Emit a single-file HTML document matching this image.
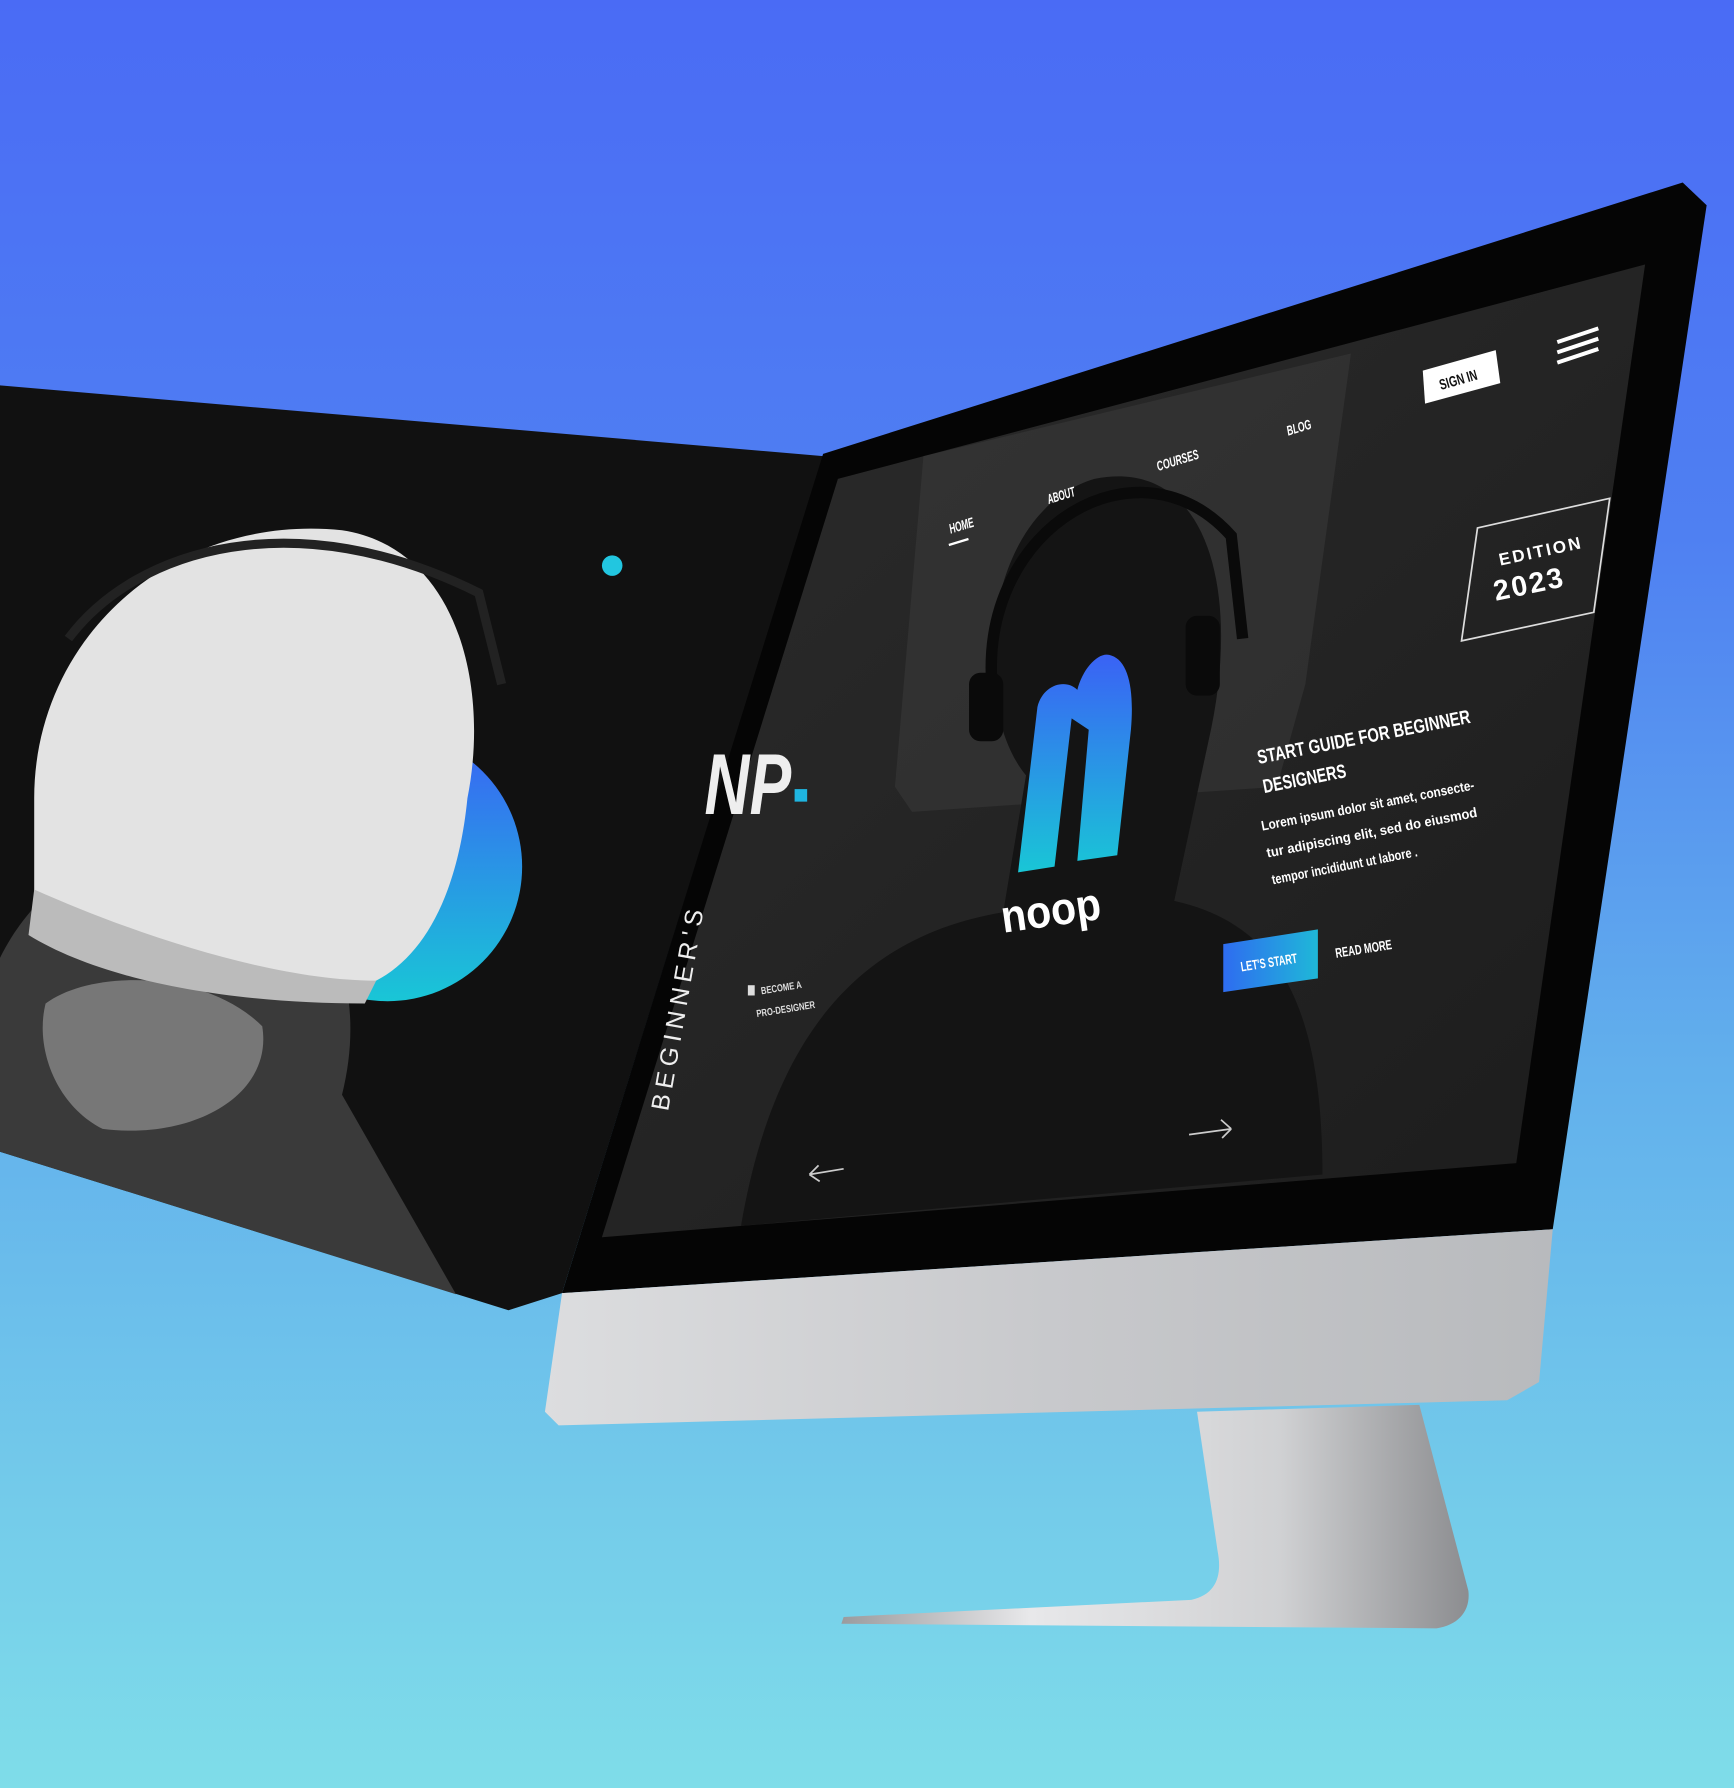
<!DOCTYPE html>
<html><head><meta charset="utf-8"><style>
html,body{margin:0;padding:0;width:1734px;height:1788px;overflow:hidden}
svg{display:block}
text{font-family:"Liberation Sans",sans-serif}
</style></head><body>
<svg width="1734" height="1788" viewBox="0 0 1521 1568" preserveAspectRatio="none">
<defs>
<linearGradient id="bg" x1="0" y1="0" x2="0" y2="1">
<stop offset="0" stop-color="#4a6bf5"/><stop offset="0.3" stop-color="#4f80f2"/><stop offset="0.6" stop-color="#62b0ec"/><stop offset="1" stop-color="#7fdde9"/></linearGradient>
<linearGradient id="blu" x1="0" y1="0" x2="0" y2="1"><stop offset="0" stop-color="#3a62f5"/><stop offset="1" stop-color="#19c6d6"/></linearGradient>
<linearGradient id="chin" x1="0" y1="0" x2="1" y2="0"><stop offset="0" stop-color="#dcdddf"/><stop offset="0.5" stop-color="#c8c9cc"/><stop offset="1" stop-color="#b8babd"/></linearGradient>
<linearGradient id="stand" x1="0" y1="0" x2="1" y2="0"><stop offset="0" stop-color="#9a9b9e"/><stop offset="0.3" stop-color="#e8e8ea"/><stop offset="0.7" stop-color="#d0d1d3"/><stop offset="1" stop-color="#8c8d90"/></linearGradient>
<linearGradient id="scr" x1="0" y1="0" x2="1" y2="1"><stop offset="0" stop-color="#2c2c2c"/><stop offset="1" stop-color="#1c1c1c"/></linearGradient>
<linearGradient id="btn" x1="0" y1="0" x2="1" y2="0"><stop offset="0" stop-color="#2e6cf0"/><stop offset="1" stop-color="#1fb8d8"/></linearGradient>
</defs>
<rect width="1521" height="1568" fill="url(#bg)"/>
<!-- left panel -->
<polygon points="0,338 722,400 493,1134 446,1149 0,1010" fill="#111"/>
<circle cx="340" cy="760" r="118" fill="url(#blu)"/>
<path d="M0,840 C40,760 120,720 230,760 C300,800 320,880 300,960 L400,1135 L0,1010 Z" fill="#3a3a3a"/>
<path d="M40,880 C80,850 180,850 230,900 C240,960 170,1000 90,990 C50,970 30,920 40,880Z" fill="#777"/>
<path d="M30,700 C30,560 150,450 300,465 C400,480 430,600 410,700 C400,800 360,860 300,870 C200,860 100,830 30,800 Z" fill="#e3e3e3"/>
<path d="M30,780 C120,820 240,860 330,860 L320,880 C200,880 90,860 25,820Z" fill="#bbb"/>
<path d="M60,560 C120,480 260,440 420,520 L440,600" stroke="#222" stroke-width="8" fill="none"/>
<circle cx="537" cy="496" r="9" fill="#22c6e0"/>
<!-- monitor bezel -->
<polygon points="722,398 1476,160 1497,180 1362,1078 493,1134" fill="#050505"/>
<polygon points="493,1134 1362,1078 1350,1212 1322,1228 490,1250 478,1238" fill="url(#chin)"/>
<!-- stand -->
<path d="M1050,1238 L1245,1232 L1288,1395 C1290,1412 1280,1425 1260,1428 L738,1424 L740,1418 L1045,1403 C1068,1398 1072,1380 1068,1360 Z" fill="url(#stand)"/>
<!-- screen -->
<polygon points="735,420 1443,232 1330,1020 528,1085" fill="url(#scr)"/>
<polygon points="810,400 1185,310 1145,600 1120,690 800,712 785,690" fill="#3a3a3a" opacity="0.55"/>
<path d="M650,1075 C680,900 760,820 880,800 L900,680 C850,620 860,450 960,420 C1060,400 1090,520 1060,650 L1030,790 C1120,810 1160,880 1160,1030 Z" fill="#141414"/>
<path d="M870,600 C860,460 1000,380 1080,470 L1090,560" stroke="#0a0a0a" stroke-width="10" fill="none"/>
<rect x="850" y="590" width="30" height="60" rx="10" fill="#0a0a0a"/>
<rect x="1040" y="540" width="30" height="70" rx="10" fill="#0a0a0a"/>
<!-- noop logo -->
<path d="M893,765 L910,620 C915,600 935,595 945,605 C950,585 965,570 975,575 C990,580 995,605 992,640 L980,750 L945,755 L955,640 L940,630 L925,760 Z" fill="url(#blu)"/>
<text x="880" y="818" font-size="40" font-weight="bold" fill="#fff" textLength="88" lengthAdjust="spacingAndGlyphs" transform="rotate(-8 880 818)">noop</text>
<!-- nav -->
<g fill="#fff" font-weight="bold" font-size="12" font-style="italic">
<text x="834" y="468" textLength="22" lengthAdjust="spacingAndGlyphs" transform="rotate(-17 834 468)">HOME</text>
<rect x="832" y="477" width="18" height="2" transform="rotate(-17 832 477)"/>
<text x="920" y="442" textLength="25" lengthAdjust="spacingAndGlyphs" transform="rotate(-17 920 442)">ABOUT</text>
<text x="1016" y="413" textLength="38" lengthAdjust="spacingAndGlyphs" transform="rotate(-17 1016 413)">COURSES</text>
<text x="1130" y="382" textLength="22" lengthAdjust="spacingAndGlyphs" transform="rotate(-17 1130 382)">BLOG</text>
</g>
<polygon points="1248,325 1312,307 1316,336 1250,354" fill="#fff"/>
<text x="1264" y="342" font-size="13" font-weight="bold" fill="#111" textLength="34" lengthAdjust="spacingAndGlyphs" transform="rotate(-16 1264 342)">SIGN IN</text>
<g stroke="#fff" stroke-width="3.5"><line x1="1366" y1="300" x2="1402" y2="288"/><line x1="1366" y1="309" x2="1402" y2="297"/><line x1="1366" y1="318" x2="1402" y2="306"/></g>
<polygon points="1296,463 1412,437 1398,537 1282,562" fill="none" stroke="#ddd" stroke-width="1.5"/>
<text x="1316" y="496" font-size="15" font-weight="bold" fill="#fff" letter-spacing="2" transform="rotate(-12 1316 496)">EDITION</text>
<text x="1312" y="527" font-size="25" font-weight="bold" fill="#fff" letter-spacing="2" transform="rotate(-12 1312 527)">2023</text>
<g fill="#fff" transform="rotate(-11 1104 670)">
<text x="1104" y="670" font-size="17" font-weight="bold" textLength="190" lengthAdjust="spacingAndGlyphs">START GUIDE FOR BEGINNER</text>
<text x="1104" y="696" font-size="17" font-weight="bold" textLength="74" lengthAdjust="spacingAndGlyphs">DESIGNERS</text>
<text x="1096" y="728" font-size="12" font-weight="bold" textLength="190" lengthAdjust="spacingAndGlyphs">Lorem ipsum dolor sit amet, consecte-</text>
<text x="1096" y="752" font-size="12" font-weight="bold" textLength="188" lengthAdjust="spacingAndGlyphs">tur adipiscing elit, sed do eiusmod</text>
<text x="1096" y="776" font-size="12" font-weight="bold" textLength="130" lengthAdjust="spacingAndGlyphs">tempor incididunt ut labore .</text>
</g>
<polygon points="1073,828 1156,815 1156,858 1073,870" fill="url(#btn)"/>
<text x="1089" y="852" font-size="12" font-weight="bold" fill="#fff" textLength="50" lengthAdjust="spacingAndGlyphs" transform="rotate(-9 1089 852)">LET'S START</text>
<text x="1172" y="840" font-size="12" font-weight="bold" fill="#fff" textLength="50" lengthAdjust="spacingAndGlyphs" transform="rotate(-9 1172 840)">READ MORE</text>
<text x="618" y="714" font-size="76" font-weight="bold" font-style="italic" fill="#eee" textLength="76" lengthAdjust="spacingAndGlyphs">NP</text>
<rect x="697" y="692" width="11" height="11" fill="#1fb5e0"/>
<text x="586" y="975" font-size="22" fill="#eee" letter-spacing="5" transform="rotate(-80 586 975)">BEGINNER'S</text>
<rect x="656" y="864" width="6" height="9" fill="#ddd"/>
<text x="668" y="872" font-size="9" font-weight="bold" fill="#ddd" textLength="36" lengthAdjust="spacingAndGlyphs" transform="rotate(-9 668 872)">BECOME A</text>
<text x="664" y="892" font-size="9" font-weight="bold" fill="#ddd" textLength="52" lengthAdjust="spacingAndGlyphs" transform="rotate(-9 664 892)">PRO-DESIGNER</text>
<g stroke="#ccc" stroke-width="1.5" fill="none"><path d="M710,1030 L740,1025 M710,1030 L718,1022 M710,1030 L719,1036"/><path d="M1043,995 L1080,990 M1080,990 L1071,982 M1080,990 L1072,998"/></g>
</svg>
</body></html>
